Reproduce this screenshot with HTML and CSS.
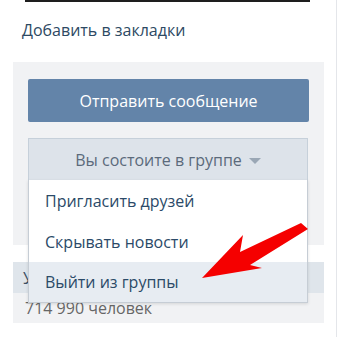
FILE: index.html
```html
<!DOCTYPE html>
<html lang="ru">
<head>
<meta charset="utf-8">
<link rel="stylesheet" href="styles.css">
</head>
<body>
<div class="page">
  <div class="col">
    <div class="top-edge"></div>
    <a class="bookmark" href="#">Добавить в закладки</a>
    <div class="panel">
      <button class="btn-primary">Отправить сообщение</button>
      <div class="dropdown">
        <div class="dd-head">Вы состоите в группе <span class="caret"></span></div>
        <ul class="dd-menu">
          <li class="dd-item">Пригласить друзей</li>
          <li class="dd-item">Скрывать новости</li>
          <li class="dd-item dd-item-hover">Выйти из группы</li>
        </ul>
      </div>
    </div>
    <div class="members">
      <div class="members-head">Участники</div>
      <div class="members-body">714 990 человек</div>
    </div>
  </div>
  <svg class="arrow" width="344" height="337" viewBox="0 0 344 337">
    <polygon points="202,278 243,235 240,252 301,223 308,229 250,265 262,268" fill="#f50000"/>
  </svg>
</div>
</body>
</html>
```
FILE: styles.css
```css
html, body {
  margin: 0;
  padding: 0;
  background: #fff;
}
body {
  font-family: "Open Sans", "DejaVu Sans", sans-serif;
  width: 344px;
  height: 337px;
  overflow: hidden;
}
.page {
  position: relative;
  width: 344px;
  height: 337px;
}
.col {
  width: 336px;
  height: 337px;
  border-right: 1px solid #e4e6ea;
  display: flex;
  flex-direction: column;
}
.top-edge {
  margin-left: 25px;
  width: 285px;
  height: 2px;
  background: #1e1e1e;
}
.bookmark {
  margin: 18px 0 0 22px;
  font-size: 16px;
  line-height: 20px;
  color: #2d4963;
  text-decoration: none;
}
.panel {
  margin: 22px 0 0 13px;
  width: 311px;
  box-sizing: border-box;
  padding: 17px 15px 65px;
  background: #f1f2f4;
}
.btn-primary {
  display: block;
  width: 281px;
  height: 43px;
  border: 0;
  border-radius: 2px;
  background: #6384a9;
  color: #fff;
  font-family: inherit;
  font-size: 16px;
  padding: 0;
}
.dropdown {
  position: relative;
  margin-top: 16px;
  width: 280px;
}
.dd-head {
  height: 42px;
  box-sizing: border-box;
  border: 1px solid #c6d0da;
  border-bottom: 0;
  background: #dde3ea;
  color: #5b6a7b;
  font-size: 16px;
  display: flex;
  align-items: center;
  justify-content: center;
  gap: 7px;
}
.caret {
  width: 0;
  height: 0;
  border-left: 6px solid transparent;
  border-right: 6px solid transparent;
  border-top: 6px solid #9aa7b5;
  margin-top: 2px;
}
.dd-menu {
  position: absolute;
  left: 0;
  top: 42px;
  width: 280px;
  box-sizing: border-box;
  margin: 0;
  padding: 0;
  list-style: none;
  background: #fff;
  border: 1px solid #c6cdd5;
  border-top: 0;
  box-shadow: 0 1px 3px rgba(0,0,0,0.12);
  z-index: 2;
}
.dd-item {
  height: 40px;
  padding-left: 16px;
  display: flex;
  align-items: center;
  font-size: 16px;
  color: #2b4a68;
}
.dd-item:first-child {
  height: 42px;
}
.dd-item-hover {
  background: #e7ecf2;
}
.members {
  margin: 17px 0 0 13px;
  width: 311px;
}
.members-head {
  height: 31px;
  background: #dfe5eb;
  padding-left: 10px;
  display: flex;
  align-items: center;
  font-size: 16px;
  color: #3b4d61;
}
.members-body {
  height: 30px;
  background: #f1f2f4;
  padding-left: 12px;
  display: flex;
  align-items: center;
  font-size: 16px;
  color: #666;
}
.arrow {
  position: absolute;
  left: 0;
  top: 0;
  z-index: 5;
  pointer-events: none;
}
```
